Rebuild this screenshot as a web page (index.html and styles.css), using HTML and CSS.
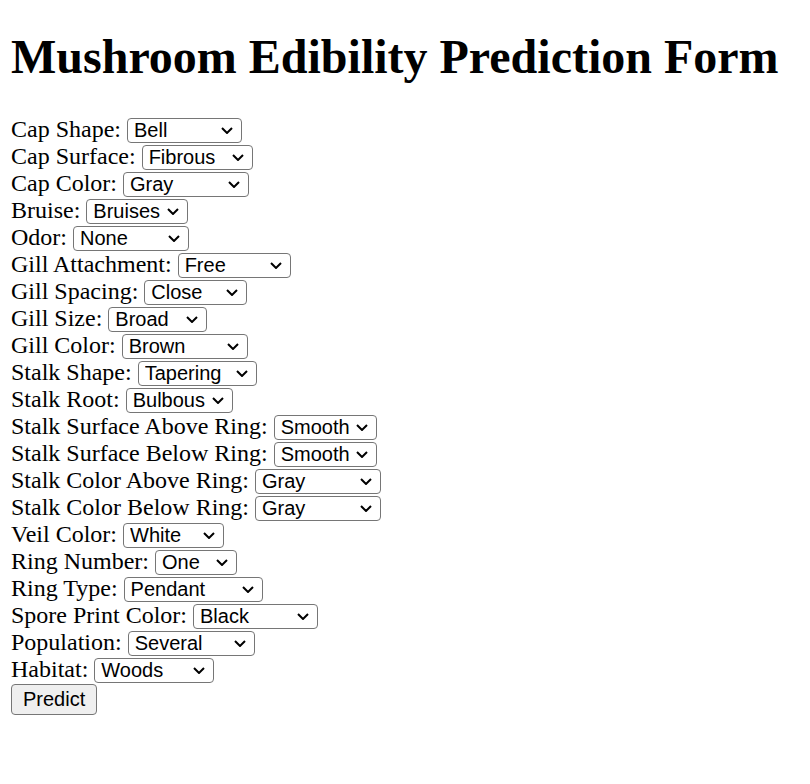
FILE: index.html
```html
<!DOCTYPE html>
<html>
<head>
<meta charset="utf-8">
<title>Mushroom Edibility Prediction Form</title>
<link rel="stylesheet" href="styles.css">
</head>
<body>
<h1 class="title">Mushroom Edibility Prediction Form</h1>
<form class="form">
  <div class="row">Cap Shape: <select class="sel w115"><option>Bell</option><option>Conical</option><option>Convex</option><option>Flat</option><option>Knobbed</option><option>Sunken</option></select></div>
  <div class="row">Cap Surface: <select class="sel w111"><option>Fibrous</option><option>Grooves</option><option>Scaly</option><option>Smooth</option></select></div>
  <div class="row">Cap Color: <select class="sel w126"><option>Gray</option><option>Brown</option><option>Buff</option><option>Cinnamon</option><option>Green</option><option>Pink</option><option>Purple</option><option>Red</option><option>White</option><option>Yellow</option></select></div>
  <div class="row">Bruise: <select class="sel w102"><option>Bruises</option><option>No</option></select></div>
  <div class="row">Odor: <select class="sel w116"><option>None</option><option>Almond</option><option>Anise</option><option>Creosote</option><option>Fishy</option><option>Foul</option><option>Musty</option><option>Pungent</option><option>Spicy</option></select></div>
  <div class="row">Gill Attachment: <select class="sel w113"><option>Free</option><option>Attached</option><option>Descending</option><option>Notched</option></select></div>
  <div class="row">Gill Spacing: <select class="sel w103"><option>Close</option><option>Crowded</option><option>Distant</option></select></div>
  <div class="row">Gill Size: <select class="sel w99"><option>Broad</option><option>Narrow</option></select></div>
  <div class="row">Gill Color: <select class="sel w126"><option>Brown</option><option>Black</option><option>Buff</option><option>Chocolate</option><option>Gray</option><option>Green</option><option>Orange</option><option>Pink</option><option>Purple</option><option>Red</option><option>White</option><option>Yellow</option></select></div>
  <div class="row">Stalk Shape: <select class="sel w119"><option>Tapering</option><option>Enlarging</option></select></div>
  <div class="row">Stalk Root: <select class="sel w107"><option>Bulbous</option><option>Club</option><option>Cup</option><option>Equal</option><option>Rooted</option></select></div>
  <div class="row">Stalk Surface Above Ring: <select class="sel w103"><option>Smooth</option><option>Fibrous</option><option>Scaly</option><option>Silky</option></select></div>
  <div class="row">Stalk Surface Below Ring: <select class="sel w103"><option>Smooth</option><option>Fibrous</option><option>Scaly</option><option>Silky</option></select></div>
  <div class="row">Stalk Color Above Ring: <select class="sel w126"><option>Gray</option><option>Brown</option><option>Buff</option><option>Cinnamon</option><option>Orange</option><option>Pink</option><option>Red</option><option>White</option><option>Yellow</option></select></div>
  <div class="row">Stalk Color Below Ring: <select class="sel w126"><option>Gray</option><option>Brown</option><option>Buff</option><option>Cinnamon</option><option>Orange</option><option>Pink</option><option>Red</option><option>White</option><option>Yellow</option></select></div>
  <div class="row">Veil Color: <select class="sel w101"><option>White</option><option>Brown</option><option>Orange</option><option>Yellow</option></select></div>
  <div class="row">Ring Number: <select class="sel w82"><option>One</option><option>None</option><option>Two</option></select></div>
  <div class="row">Ring Type: <select class="sel w139"><option>Pendant</option><option>Cobwebby</option><option>Evanescent</option><option>Flaring</option><option>Large</option><option>None</option><option>Sheathing</option><option>Zone</option></select></div>
  <div class="row">Spore Print Color: <select class="sel w125"><option>Black</option><option>Brown</option><option>Buff</option><option>Chocolate</option><option>Green</option><option>Orange</option><option>Purple</option><option>White</option><option>Yellow</option></select></div>
  <div class="row">Population: <select class="sel w127"><option>Several</option><option>Abundant</option><option>Clustered</option><option>Numerous</option><option>Scattered</option><option>Solitary</option></select></div>
  <div class="row">Habitat: <select class="sel w120"><option>Woods</option><option>Grasses</option><option>Leaves</option><option>Meadows</option><option>Paths</option><option>Urban</option><option>Waste</option></select></div>
  <div class="row"><button type="button" class="btn">Predict</button></div>
</form>
</body>
</html>
```

FILE: styles.css
```css
html, body {
  background: #ffffff;
}
body {
  margin: 12px 11px;
  font-family: "Liberation Serif", "Times New Roman", serif;
  font-size: 24px;
  color: #000000;
}
.title {
  font-size: 48px;
  font-weight: bold;
  margin: 17px 0 32px 0;
}
.form {
  margin: 0;
}
.row {
  white-space: nowrap;
}
.sel {
  -webkit-appearance: none;
  appearance: none;
  font-family: "Liberation Sans", Arial, sans-serif;
  font-size: 20px;
  line-height: 23px;
  height: 25px;
  box-sizing: border-box;
  color: #000000;
  background-color: #ffffff;
  background-image: url("data:image/svg+xml,%3Csvg xmlns='http://www.w3.org/2000/svg' width='12' height='7' viewBox='0 0 12 7'%3E%3Cpath d='M1 1 L6 6 L11 1' fill='none' stroke='%23000' stroke-width='2'/%3E%3C/svg%3E");
  background-repeat: no-repeat;
  background-position: right 8px center;
  background-size: 12px 7px;
  border: 1px solid #767676;
  border-radius: 4px;
  padding: 0 22px 0 6px;
  margin: 0;
  vertical-align: baseline;
}
.btn {
  font-family: "Liberation Sans", Arial, sans-serif;
  font-size: 20px;
  line-height: 23px;
  height: 31px;
  box-sizing: border-box;
  padding: 2px 11px;
  margin: 1px 0 0 0;
  color: #000000;
  background-color: #efefef;
  border: 1px solid #767676;
  border-radius: 4px;
}
.w82 { width: 82px; }
.w99 { width: 99px; }
.w101 { width: 101px; }
.w102 { width: 102px; }
.w103 { width: 103px; }
.w107 { width: 107px; }
.w111 { width: 111px; }
.w113 { width: 113px; }
.w115 { width: 115px; }
.w116 { width: 116px; }
.w119 { width: 119px; }
.w120 { width: 120px; }
.w125 { width: 125px; }
.w126 { width: 126px; }
.w127 { width: 127px; }
.w139 { width: 139px; }
```
